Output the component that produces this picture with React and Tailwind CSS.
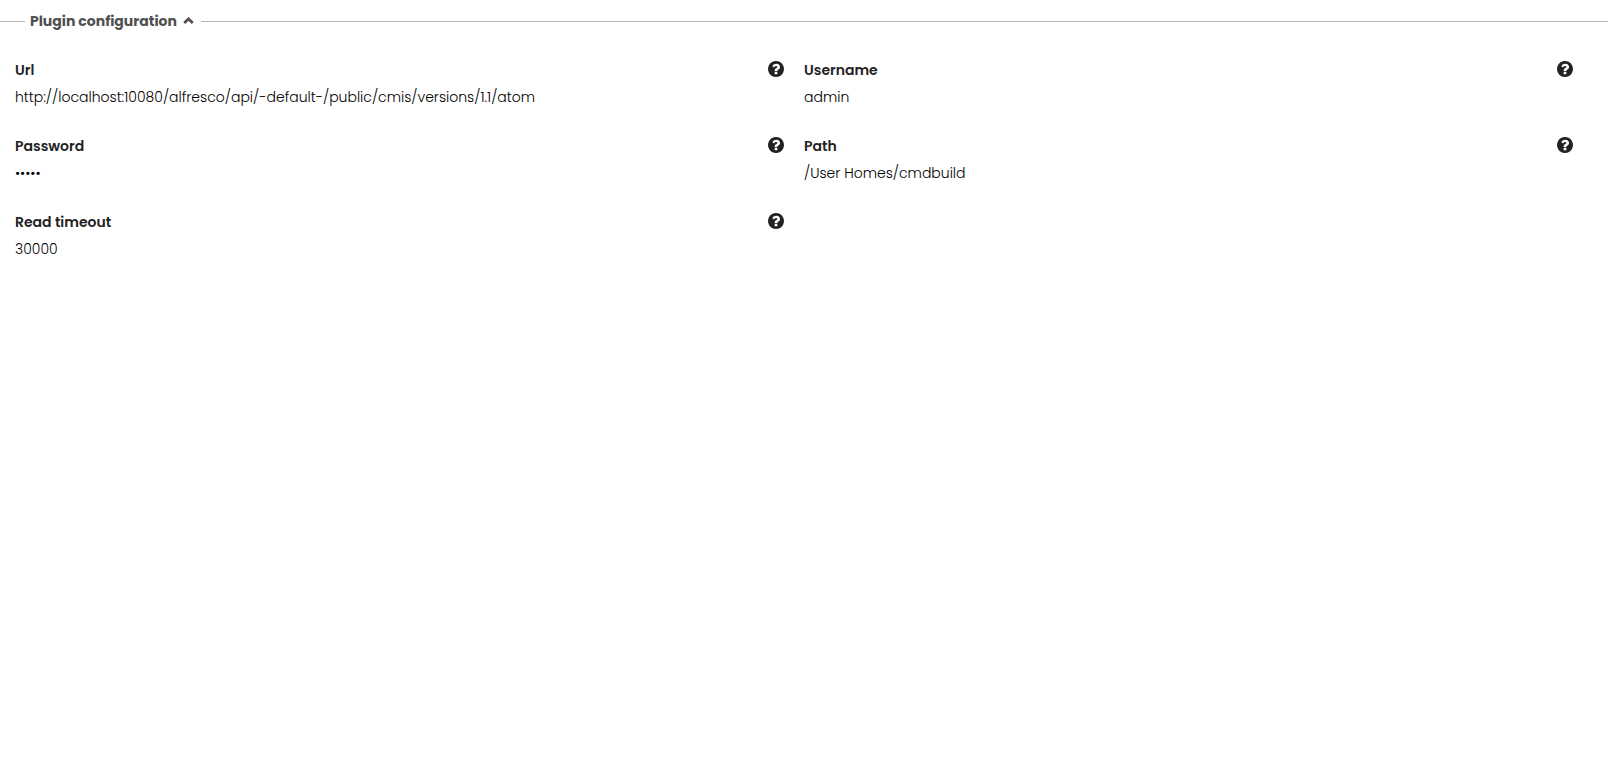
import { useState } from "react";

const fields = [
  { id: "url", label: "Url", value: "http://localhost:10080/alfresco/api/-default-/public/cmis/versions/1.1/atom" },
  { id: "username", label: "Username", value: "admin" },
  { id: "password", label: "Password", value: "•••••" },
  { id: "path", label: "Path", value: "/User Homes/cmdbuild" },
  { id: "timeout", label: "Read timeout", value: "30000" },
];

function HelpIcon() {
  return (
    <svg viewBox="0 0 1536 1536" fill="currentColor" fillRule="evenodd" className="block size-4" aria-hidden="true">
      <path
        transform="translate(0 1408) scale(1 -1)"
        d="M896 160v192q0 14 -9 23t-23 9h-192q-14 0 -23 -9t-9 -23v-192q0 -14 9 -23t23 -9h192q14 0 23 9t9 23zM1152 832q0 88 -55.5 163t-138.5 116t-170 41q-243 0 -371 -213q-15 -24 8 -42l132 -100q7 -6 19 -6q16 0 25 12q53 68 86 92q34 24 86 24q48 0 85.5 -26t37.5 -59q0 -38 -20 -61t-68 -45q-63 -28 -115.5 -86.5t-52.5 -125.5v-36q0 -14 9 -23t23 -9h192q14 0 23 9t9 23q0 19 21.5 49.5t54.5 49.5q32 18 49 28.5t46 35t44.5 48t28 60.5t12.5 81zM1536 640q0 -209 -103 -385.5t-279.5 -279.5t-385.5 -103t-385.5 103t-279.5 279.5t-103 385.5t103 385.5t279.5 279.5t385.5 103t385.5 -103t279.5 -279.5t103 -385.5z"
      />
    </svg>
  );
}

function Field({ id, label, value }) {
  return (
    <div>
      <dt className="flex items-start justify-between">
        <span id={id} className="font-semibold leading-[26px]">{label}</span>
        <button type="button" aria-label={`Help: ${label}`} className="mt-1 cursor-pointer"><HelpIcon/></button>
      </dt>
      <dd aria-labelledby={id} className="mt-0.5 font-light leading-6 text-black">{value}</dd>
    </div>
  );
}

export default function App() {
  const [open, setOpen] = useState(true);

  return (
    <main className="min-h-screen bg-white pt-[9px] text-sm text-[#222222] font-['Poppins','Inter',sans-serif]">
      <fieldset className="border-t border-[#b5b5b5]">
        <legend className="ml-[25px] px-[5px]">
          <button type="button" aria-expanded={open} onClick={() => setOpen(!open)} className="flex items-center gap-1.5 h-6 pr-0.5 font-bold text-[#505050] cursor-pointer">
            Plugin configuration
            <svg viewBox="0 0 11 8" className={`w-[11px] h-2 ${open ? "" : "rotate-180"}`} fill="none" stroke="currentColor" strokeWidth="2.8" aria-hidden="true">
              <path d="M1.2 6 5.5 1.9 9.8 6"/>
            </svg>
          </button>
        </legend>
        {open && (
          <dl className="grid grid-cols-2 gap-x-5 gap-y-6 pt-6 pl-[15px] pr-[35px]">
            {fields.map((f) => <Field key={f.id} {...f}/>)}
          </dl>
        )}
      </fieldset>
    </main>
  );
}
